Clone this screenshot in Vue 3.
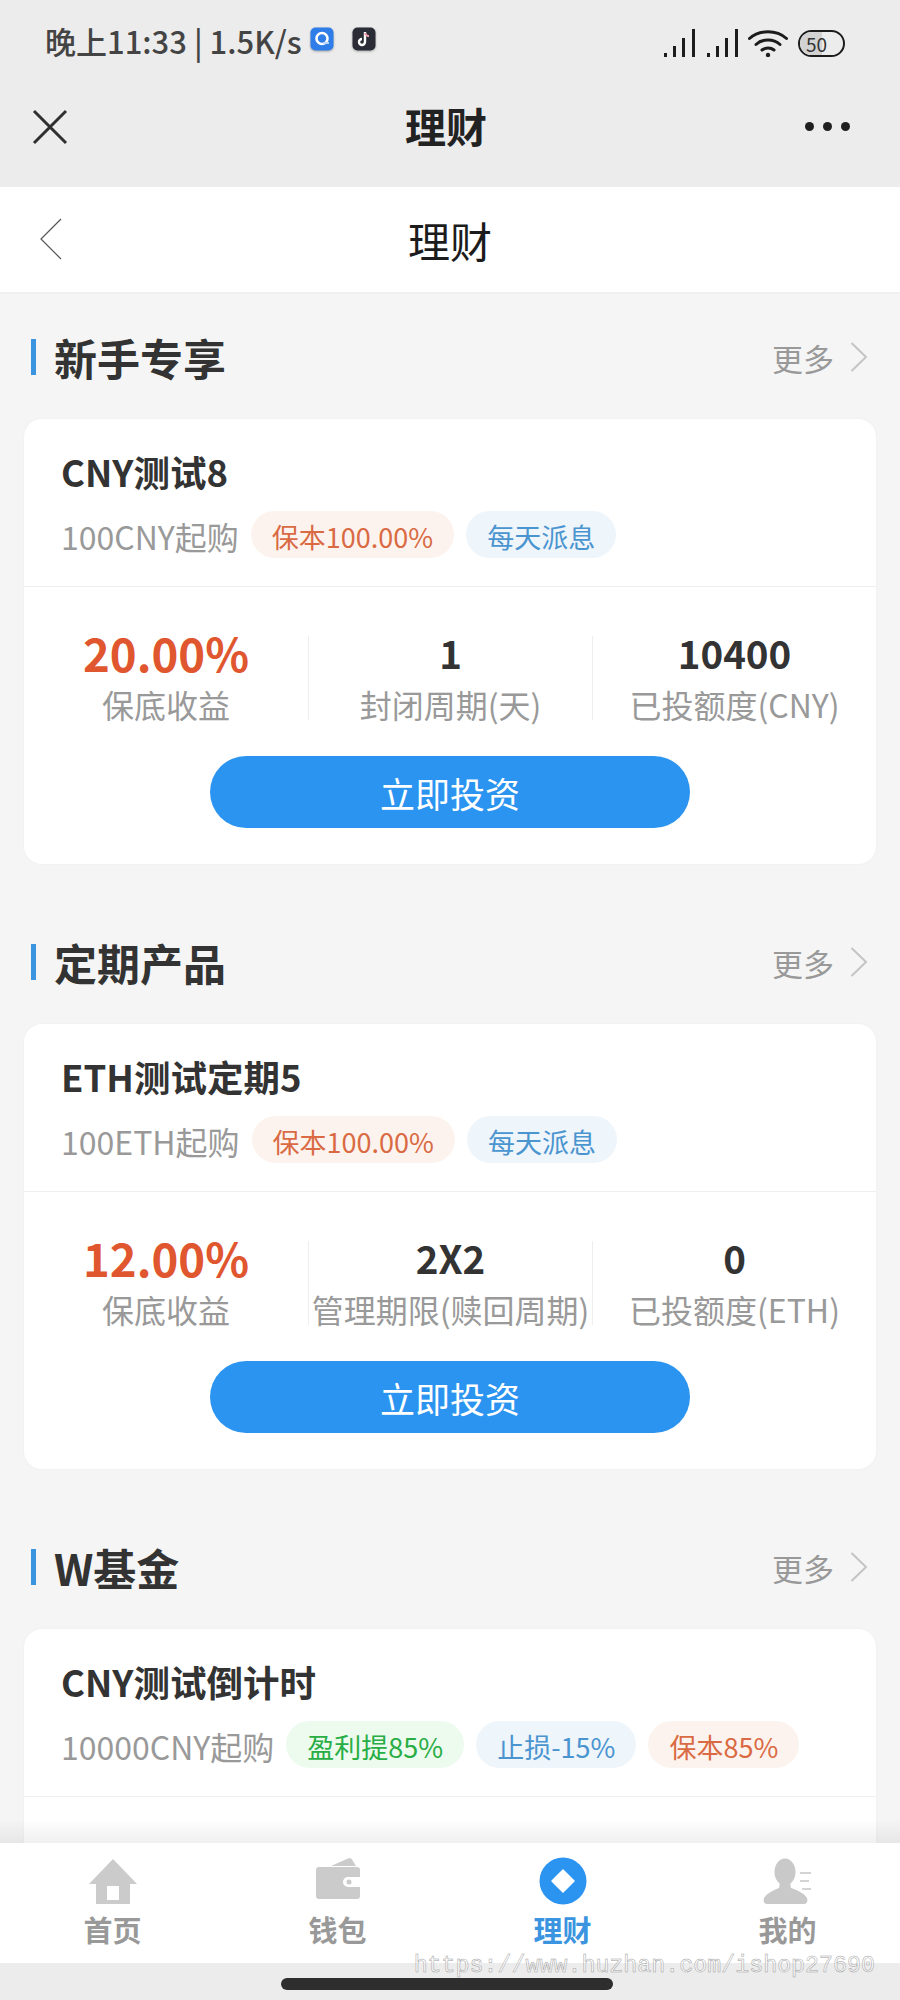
<script setup>
const sections = [
  {
    title: '新手专享',
    name: 'CNY测试8',
    start: '100CNY起购',
    tags: [
      { text: '保本100.00%', type: 'orange' },
      { text: '每天派息', type: 'blue' },
    ],
    stats: [
      { value: '20.00%', label: '保底收益', hot: true },
      { value: '1', label: '封闭周期(天)' },
      { value: '10400', label: '已投额度(CNY)' },
    ],
  },
  {
    title: '定期产品',
    name: 'ETH测试定期5',
    start: '100ETH起购',
    tags: [
      { text: '保本100.00%', type: 'orange' },
      { text: '每天派息', type: 'blue' },
    ],
    stats: [
      { value: '12.00%', label: '保底收益', hot: true },
      { value: '2X2', label: '管理期限(赎回周期)' },
      { value: '0', label: '已投额度(ETH)' },
    ],
  },
  {
    title: 'W基金',
    name: 'CNY测试倒计时',
    start: '10000CNY起购',
    tags: [
      { text: '盈利提85%', type: 'green' },
      { text: '止损-15%', type: 'blue' },
      { text: '保本85%', type: 'orange' },
    ],
    stats: [],
  },
]

const tabs = [
  { key: 'home', label: '首页' },
  { key: 'wallet', label: '钱包' },
  { key: 'invest', label: '理财', active: true },
  { key: 'mine', label: '我的' },
]
</script>

<template>
  <div class="page">
    <div class="top-gray">
      <div class="status">
        <div class="status-left">
          <span class="status-text">晚上11:33 | 1.5K/s</span>
          <svg class="app-icon" width="24" height="25" viewBox="0 0 24 25">
            <rect x="0.5" y="0.5" width="23" height="23" rx="5" fill="#2f7de8" />
            <circle cx="12" cy="11.5" r="5.5" fill="none" stroke="#fff" stroke-width="2.6" />
            <path d="M13 16h6" stroke="#bcd8ff" stroke-width="2" />
          </svg>
          <svg class="app-icon second" width="24" height="25" viewBox="0 0 24 25">
            <rect x="0.5" y="0.5" width="23" height="23" rx="5" fill="#2a2d36" />
            <path d="M13 5v10a3 3 0 1 1-3-3" fill="none" stroke="#fff" stroke-width="2.4" />
            <path d="M13 6c.6 2 2 3 4 3.2" fill="none" stroke="#f2a0ae" stroke-width="2" />
          </svg>
        </div>
        <div class="status-right">
          <svg v-for="n in 2" :key="n" width="31" height="28" viewBox="0 0 31 28" class="signal">
            <rect x="0" y="24" width="3" height="4" fill="#1c1c1c" />
            <rect x="9" y="17" width="3" height="11" fill="#1c1c1c" />
            <rect x="18" y="9" width="3" height="19" fill="#1c1c1c" />
            <rect x="28" y="0" width="3" height="28" fill="#1c1c1c" />
          </svg>
          <svg width="40" height="28" viewBox="0 0 40 28" class="wifi">
            <path d="M1.500 9.500C11.500 .5 28.500 .5 38.500 9.500" fill="none" stroke="#1c1c1c" stroke-width="3" stroke-linecap="round" />
            <path d="M8 15.500C14.500 9.500 25.500 9.500 32 15.500" fill="none" stroke="#1c1c1c" stroke-width="3" stroke-linecap="round" />
            <path d="M14 21c3.200-2.600 8.800-2.600 12 0" fill="none" stroke="#1c1c1c" stroke-width="3" stroke-linecap="round" />
            <circle cx="20" cy="26" r="2.200" fill="#1c1c1c" />
          </svg>
          <div class="battery"><span class="battery-fill"></span><span class="battery-num">50</span></div>
        </div>
      </div>
      <div class="nav">
        <svg width="36" height="36" viewBox="0 0 36 36">
          <path d="M2 2l32 32M34 2L2 34" stroke="#2f2f2f" stroke-width="3" fill="none" />
        </svg>
        <span class="nav-title">理财</span>
        <div class="dots"><i></i><i></i><i></i></div>
      </div>
    </div>

    <div class="header">
      <svg class="back" width="22" height="42" viewBox="0 0 22 42">
        <path d="M21 1L1 21l20 20" fill="none" stroke="#555" stroke-width="1.2" />
      </svg>
      <span class="header-title">理财</span>
    </div>

    <div class="content">
      <section v-for="s in sections" :key="s.title" class="section">
        <div class="section-head">
          <div class="section-title">
            <i class="bar"></i>
            <span>{{ s.title }}</span>
          </div>
          <div class="more">
            <span>更多</span>
            <svg width="18" height="30" viewBox="0 0 18 30">
              <path d="M1.500 1L16 15 1.500 29" fill="none" stroke="#c4c4c4" stroke-width="2" />
            </svg>
          </div>
        </div>
        <div class="card">
          <div class="card-top">
            <div class="card-name">{{ s.name }}</div>
            <div class="card-sub">
              <span class="start">{{ s.start }}</span>
              <span v-for="t in s.tags" :key="t.text" class="tag" :class="t.type">{{ t.text }}</span>
            </div>
          </div>
          <div class="card-body">
            <template v-if="s.stats.length">
              <div class="stats">
                <div v-for="st in s.stats" :key="st.label" class="stat">
                  <div class="stat-value" :class="{ hot: st.hot }">{{ st.value }}</div>
                  <div class="stat-label">{{ st.label }}</div>
                </div>
              </div>
              <button class="invest">立即投资</button>
            </template>
          </div>
        </div>
      </section>
    </div>

    <div class="tabbar">
      <div v-for="t in tabs" :key="t.key" class="tab" :class="{ active: t.active }">
        <svg width="50" height="48" viewBox="0 0 50 48">
          <template v-if="t.key === 'home'">
            <path d="M25 2L1 27h7v20h34V27h7z" fill="#cbcbcb" />
            <rect x="19" y="29" width="12" height="14" fill="#fff" />
          </template>
          <template v-else-if="t.key === 'wallet'">
            <path d="M18 9L35 1.500c2-.8 3.500-.2 4 1L43 9z" fill="#cbcbcb" />
            <path d="M6 10h38a3 3 0 0 1 3 3v7H35a5 5 0 0 0 0 10h12v9a3 3 0 0 1-3 3H6a3 3 0 0 1-3-3V13a3 3 0 0 1 3-3z" fill="#cbcbcb" />
            <circle cx="36" cy="25" r="2.500" fill="#cbcbcb" />
          </template>
          <template v-else-if="t.key === 'invest'">
            <circle cx="25" cy="24" r="23.500" fill="#2b94f0" />
            <path d="M25 13l11 11-11 11-11-11z" fill="#fff" stroke="#fff" stroke-width="1.500" stroke-linejoin="round" />
          </template>
          <template v-else>
            <ellipse cx="22" cy="15" rx="10.500" ry="13.500" fill="#c9c9c9" />
            <path d="M17 26h10l1 5c6 2 13 5 16 10 1 3 0 6-3 6H4c-3 0-4-3-3-6 3-5 10-8 15-10z" fill="#c9c9c9" />
            <path d="M37 16h11M37 24h9M39 32h9" stroke="#d4d4d4" stroke-width="2" fill="none" />
          </template>
        </svg>
        <span class="tab-label">{{ t.label }}</span>
      </div>
    </div>

    <div class="bottom-strip"><i class="indicator"></i></div>
    <div class="watermark">https://www.huzhan.com/ishop27690</div>
  </div>
</template>

<style>
html,
body {
  margin: 0;
  background: #f5f5f5;
}
</style>

<style scoped>
.page {
  position: relative;
  width: 900px;
  height: 2000px;
  display: flex;
  flex-direction: column;
  overflow: hidden;
  background: #f5f5f5;
  font-family: "Noto Sans CJK SC", "Noto Sans", sans-serif;
  color: #333;
}

.top-gray {
  height: 187px;
  flex: none;
  background: #ececec;
}

.status {
  height: 66px;
  padding: 0 55px 0 45px;
  display: flex;
  justify-content: space-between;
  align-items: flex-end;
}

.status-left {
  display: flex;
  align-items: center;
  height: 44px;
  margin-bottom: 3px;
}

.status-text {
  font-size: 31px;
  line-height: 44px;
  font-weight: 500;
  color: #444;
  white-space: nowrap;
}

.app-icon {
  margin: 0 0 3px 8px;
  filter: drop-shadow(0 1px 1px rgba(0, 0, 0, 0.3));
}

.app-icon.second {
  margin-left: 18px;
}

.status-right {
  display: flex;
  align-items: center;
  height: 36px;
  margin-bottom: 5px;
}

.signal {
  margin-right: 12px;
}

.wifi {
  margin-left: -2px;
}

.battery {
  position: relative;
  width: 47px;
  height: 27px;
  margin-left: 10px;
  box-sizing: border-box;
  border: 2px solid #1c1c1c;
  border-radius: 14px;
  overflow: hidden;
}

.battery-fill {
  position: absolute;
  left: 0;
  top: 0;
  bottom: 0;
  width: 22px;
  background: #d2d2d2;
}

.battery-num {
  position: relative;
  display: block;
  padding-left: 6px;
  font-size: 19px;
  line-height: 23px;
  color: #333;
}

.nav {
  height: 121px;
  padding: 0 50px 0 32px;
  display: flex;
  align-items: center;
  justify-content: space-between;
}

.nav-title {
  flex: 1;
  text-align: center;
  font-size: 41px;
  line-height: 56px;
  margin-bottom: 3px;
  font-weight: 700;
  color: #222;
  padding-left: 19px;
}

.dots {
  display: flex;
  gap: 9px;
}

.dots i {
  width: 9px;
  height: 9px;
  border-radius: 50%;
  background: #1f1f1f;
}

.header {
  height: 107px;
  flex: none;
  box-sizing: border-box;
  display: flex;
  align-items: center;
  padding-left: 40px;
  background: #fff;
  border-bottom: 2px solid #f0f0f0;
}

.back {
  flex: none;
  margin-bottom: 2px;
}

.header-title {
  flex: 1;
  text-align: center;
  margin-left: -62px;
  font-size: 42px;
  line-height: 60px;
  color: #1c1c1c;
}

.content {
  flex: 1;
  min-height: 0;
  overflow: hidden;
  padding-top: 31px;
}

.section {
  padding: 0 24px;
  margin-bottom: 66px;
}

.section-head {
  height: 64px;
  margin-bottom: 30px;
  display: flex;
  align-items: center;
  justify-content: space-between;
}

.section-title {
  display: flex;
  align-items: center;
  font-size: 43px;
  font-weight: 700;
  color: #333;
  line-height: 64px;
  padding-left: 7px;
}

.bar {
  width: 5px;
  height: 36px;
  margin-right: 18px;
  background: #3b94e0;
}

.more {
  display: flex;
  align-items: center;
  gap: 16px;
  font-size: 31px;
  color: #999;
  padding-right: 8px;
}

.card {
  border-radius: 18px;
  background: #fff;
  box-shadow: 0 0 3px rgba(0, 0, 0, 0.04);
}

.card-top {
  height: 168px;
  box-sizing: border-box;
  padding: 26px 37px 0;
  border-bottom: 1px solid #eee;
}

.card-name {
  font-size: 36.5px;
  line-height: 54px;
  font-weight: 700;
  color: #333;
}

.card-sub {
  display: flex;
  align-items: center;
  margin-top: 12px;
  height: 47px;
}

.start {
  font-size: 32px;
  line-height: 48px;
  padding-top: 2px;
  color: #999;
  margin-right: 12px;
  white-space: nowrap;
}

.tag {
  height: 47px;
  padding: 0 21px;
  margin-right: 12px;
  border-radius: 24px;
  font-size: 27px;
  line-height: 51px;
  white-space: nowrap;
}

.tag.orange {
  color: #d96a43;
  background: #fdf3ee;
}

.tag.blue {
  color: #4a94cf;
  background: #eef5fb;
}

.tag.green {
  color: #29ad45;
  background: #edfbef;
}

.card-body {
  height: 277px;
  box-sizing: border-box;
  padding-top: 49px;
}

.stats {
  display: grid;
  grid-template-columns: repeat(3, 1fr);
}

.stat {
  height: 84px;
  text-align: center;
  border-left: 1px solid #eee;
  white-space: nowrap;
}

.stat:first-child {
  border-left: 0;
}

.stat-value {
  height: 58px;
  margin-top: -12px;
  font-size: 38.5px;
  line-height: 56px;
  font-weight: 700;
  color: #333;
}

.stat-value.hot {
  font-size: 45.5px;
  color: #e0562f;
}

.stat-label {
  font-size: 32px;
  line-height: 44px;
  color: #999;
}

.invest {
  display: block;
  width: 480px;
  height: 72px;
  margin: 36px auto 0;
  border: 0;
  padding: 0;
  border-radius: 36px;
  background: #2b94f0;
  color: #fff;
  font-family: inherit;
  font-size: 35px;
}

.tabbar {
  position: relative;
  height: 120px;
  flex: none;
  display: grid;
  grid-template-columns: repeat(4, 1fr);
  background: #fff;
}

/* soft shadow the bar throws on the page above it */
.tabbar::before {
  content: "";
  position: absolute;
  left: 0;
  right: 0;
  top: -24px;
  height: 24px;
  background: linear-gradient(to bottom, rgba(0, 0, 0, 0), rgba(0, 0, 0, 0.06));
}

.tab {
  display: flex;
  flex-direction: column;
  align-items: center;
  padding-top: 14px;
  box-sizing: border-box;
}

.tab-label {
  font-size: 29px;
  line-height: 40px;
  margin-top: 4px;
  font-weight: 700;
  color: #999;
}

.tab.active .tab-label {
  color: #3b94e0;
}

.bottom-strip {
  height: 37px;
  flex: none;
  background: #ececec;
  display: flex;
  justify-content: center;
  padding-top: 15px;
  box-sizing: border-box;
}

.indicator {
  width: 332px;
  height: 12px;
  margin-right: 6px;
  border-radius: 6px;
  background: #2e2e2e;
}

.watermark {
  position: absolute;
  right: 25px;
  top: 1951px;
  font-family: "Liberation Mono", monospace;
  font-size: 23.3px;
  line-height: 30px;
  color: rgba(255, 255, 255, 0.6);
  -webkit-text-stroke: 0.5px #a0a0a0;
  white-space: nowrap;
}
</style>
